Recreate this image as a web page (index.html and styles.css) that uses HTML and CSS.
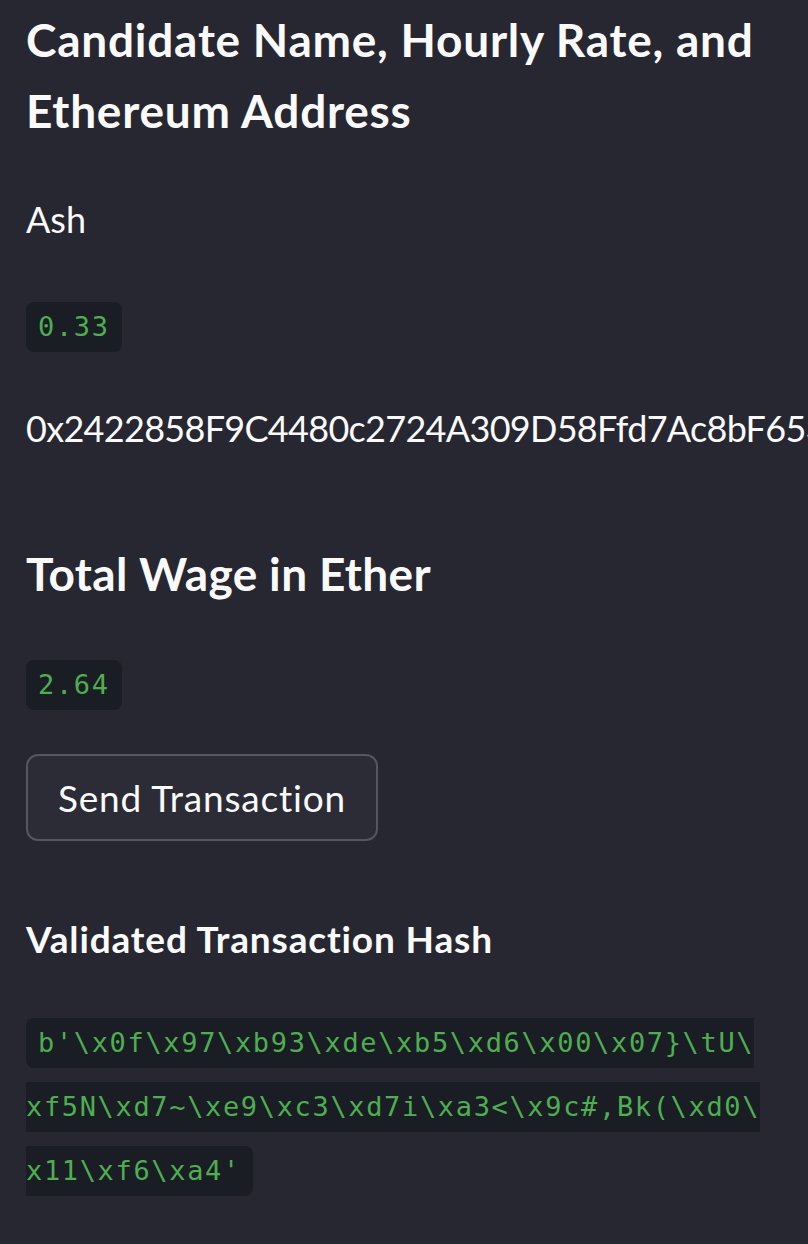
FILE: index.html
```html
<!DOCTYPE html>
<html lang="en">
<head>
<meta charset="utf-8">
<title>Candidate</title>
<link rel="stylesheet" href="styles.css">
</head>
<body>
<div class="sidebar">
  <h2 class="title t1">Candidate Name, Hourly Rate, and Ethereum Address</h2>
  <p class="text name">Ash</p>
  <p class="text rate"><code class="code">0.33</code></p>
  <p class="text addr">0x2422858F9C4480c2724A309D58Ffd7Ac8bF6535</p>
  <h2 class="title t2">Total Wage in Ether</h2>
  <p class="text wage"><code class="code">2.64</code></p>
  <div class="btn-row"><button class="btn">Send Transaction</button></div>
  <p class="text bold">Validated Transaction Hash</p>
  <p class="text hash"><code class="code">b'\x0f\x97\xb93\xde\xb5\xd6\x00\x07}\tU\xf5N\xd7~\xe9\xc3\xd7i\xa3&lt;\x9c#,Bk(\xd0\x11\xf6\xa4'</code></p>
</div>
</body>
</html>
```

FILE: styles.css
```css
html, body {
  margin: 0;
  padding: 0;
  overflow: hidden;
  background: #262730;
}
body {
  color: #fafafa;
  font-family: Lato, "Open Sans", sans-serif;
}
.sidebar {
  width: 740px;
  padding: 0 42px 0 26px;
  display: flex;
  flex-direction: column;
}
.title {
  font-size: 46px;
  line-height: 71px;
  font-weight: 700;
  letter-spacing: 0.75px;
  margin: 0;
}
.t1 { margin-top: 4.4px; }
.t2 { margin-top: 78.4px; letter-spacing: 0.35px; }
.text {
  font-size: 36px;
  line-height: 64px;
  margin: 0;
}
.name { margin-top: 41px; }
.rate { margin-top: 39.1px; }
.addr { margin-top: 41.5px; white-space: nowrap; letter-spacing: -0.7px; }
.wage { margin-top: 39.1px; }
.code {
  font-family: "DejaVu Sans Mono", monospace;
  font-size: 27px;
  line-height: 40px;
  letter-spacing: 1.65px;
  color: #4caf50;
  background: #1b1d24;
  padding: 9.3px 12px;
  border-radius: 8px;
  word-break: break-all;
  line-break: anywhere;
}
.btn-row { margin-top: 41.5px; }
.btn {
  font-family: Lato, "Open Sans", sans-serif;
  font-size: 37px;
  letter-spacing: 0.8px;
  color: #fafafa;
  background: #2b2c36;
  border: 2px solid #55565e;
  border-radius: 12px;
  padding: 0 30px;
  height: 87px;
}
.bold { font-size: 37px; font-weight: 700; letter-spacing: 0.85px; margin-top: 66px; }
.hash { margin-top: 35.5px; }
```
